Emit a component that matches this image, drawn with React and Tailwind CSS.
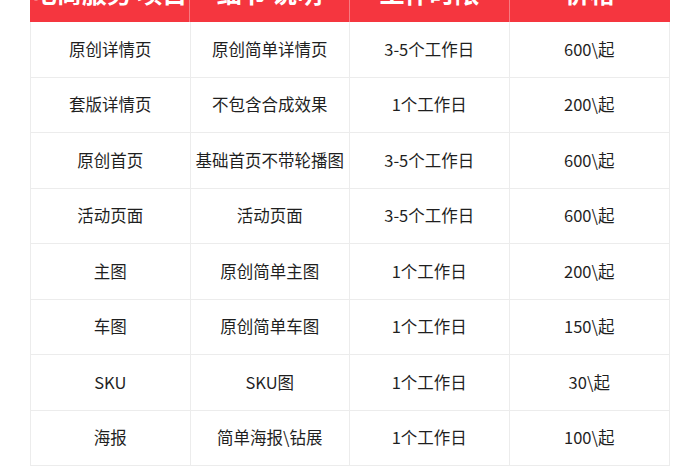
export default function App() {
  const rows = [
    ["原创详情页", "原创简单详情页", "3-5个工作日", "600\\起"],
    ["套版详情页", "不包含合成效果", "1个工作日", "200\\起"],
    ["原创首页", "基础首页不带轮播图", "3-5个工作日", "600\\起"],
    ["活动页面", "活动页面", "3-5个工作日", "600\\起"],
    ["主图", "原创简单主图", "1个工作日", "200\\起"],
    ["车图", "原创简单车图", "1个工作日", "150\\起"],
    ["SKU", "SKU图", "1个工作日", "30\\起"],
    ["海报", "简单海报\\钻展", "1个工作日", "100\\起"],
  ];
  const head = ["电商服务 项目", "细节 说明", "工作时限", "价格"];
  return (
    <div
      className="w-[700px] h-[470px] overflow-hidden bg-white"
      style={{ fontFamily: '"Noto Sans CJK SC", "Noto Sans", sans-serif' }}
    >
      <div className="mx-[30px] mt-[-38px] w-[640px]">
        <div className="grid grid-cols-4 h-[60px] bg-[#f5363f]">
          {head.map((h, i) => (
            <div
              key={i}
              className={`flex items-center justify-center pt-[1px] leading-none whitespace-nowrap text-white font-bold text-[25px] ${i < 3 ? "border-r border-[#f77a80]" : ""}`}
            >
              {h}
            </div>
          ))}
        </div>
        <div className="border-l border-r border-[#ececec]">
          {rows.map((r, ri) => (
            <div key={ri} className="grid grid-cols-4 h-[55.5px] border-b border-[#ececec]">
              {r.map((c, ci) => (
                <div
                  key={ci}
                  className={`flex items-center justify-center text-[16.5px] text-[#1f1f1f] ${ci < 3 ? "border-r border-[#ececec]" : ""}`}
                >
                  {c}
                </div>
              ))}
            </div>
          ))}
        </div>
      </div>
    </div>
  );
}
